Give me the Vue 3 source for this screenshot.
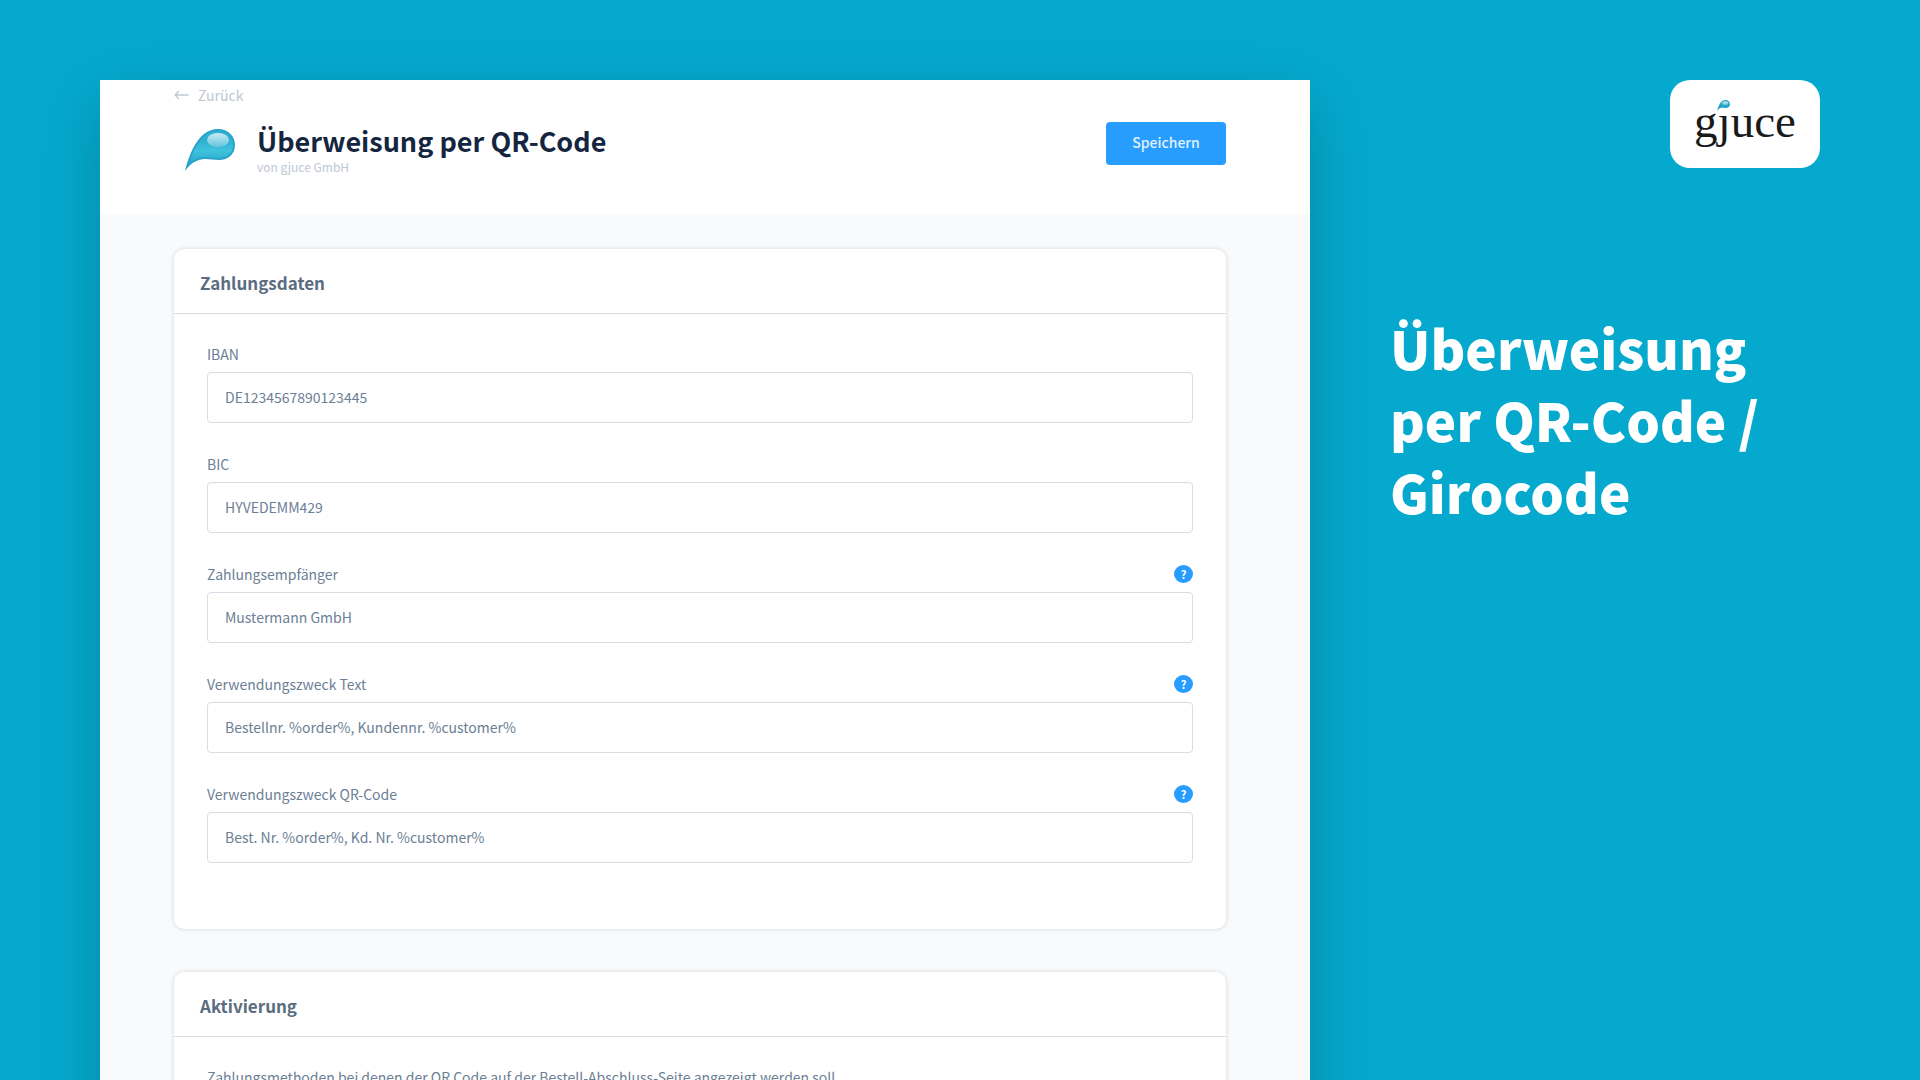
<template>
  <div class="page">
    <main class="shot">
      <header class="head">
        <a class="back" href="#">
          <svg class="back-icon" viewBox="0 0 15 10" aria-hidden="true">
            <path d="M14.5 5H1M5 1L1 5l4 4" fill="none" stroke="currentColor" stroke-width="1.300" />
          </svg>
          Zurück
        </a>
        <div class="head-row">
          <svg class="drop" viewBox="0 0 50 42" aria-hidden="true">
            <defs>
              <linearGradient id="dropFill" x1="0" y1="0" x2="0" y2="1">
                <stop offset="0" stop-color="#2fb0d2" />
                <stop offset=".35" stop-color="#31b2d3" />
                <stop offset=".6" stop-color="#40c3dc" />
                <stop offset="1" stop-color="#27a6cd" />
              </linearGradient>
              <linearGradient id="dropShine" x1="0" y1="0" x2="0" y2="1">
                <stop offset="0" stop-color="#c9ebf2" />
                <stop offset="1" stop-color="#62c6dc" />
              </linearGradient>
            </defs>
            <path d="M0 42C4 26 13 0 33 0 43 0 50 7 50 16 50 25 43 31 34 31 26 31 22 29 14 31 7 33 3 38 0 42Z" fill="#27a3ca" />
            <path d="M4 35C8 21 17 2 33 2 42 2 48 8 48 16 48 24 42 29 34 29 26 29 22 27 14 29 10 30 7 32 4 35Z" fill="url(#dropFill)" />
            <ellipse cx="33" cy="11" rx="11" ry="7" fill="url(#dropShine)" />
          </svg>
          <div class="head-text">
            <h1 class="title">Überweisung per QR-Code</h1>
            <p class="vendor">von gjuce GmbH</p>
          </div>
          <button class="save" type="button">Speichern</button>
        </div>
      </header>

      <div class="content">
        <section class="card">
          <h2 class="card-title">Zahlungsdaten</h2>
          <div class="card-body">
            <div v-for="field in fields" :key="field.id" class="field">
              <div class="field-head">
                <label :for="field.id">{{ field.label }}</label>
                <button v-if="field.help" class="help" type="button">?</button>
              </div>
              <input :id="field.id" v-model="field.value" class="field-input" type="text" />
            </div>
          </div>
        </section>

        <section class="card">
          <h2 class="card-title">Aktivierung</h2>
          <div class="card-body">
            <p class="hint">Zahlungsmethoden bei denen der QR Code auf der Bestell-Abschluss-Seite angezeigt werden soll</p>
          </div>
        </section>
      </div>
    </main>

    <aside class="side">
      <div class="logo">
        <span class="logo-text">gjuce</span>
        <svg class="logo-drop" viewBox="0 0 50 42" aria-hidden="true">
          <path d="M0 42C4 26 13 0 33 0 43 0 50 7 50 16 50 25 43 31 34 31 26 31 22 29 14 31 7 33 3 38 0 42Z" fill="#27a3ca" />
          <ellipse cx="32" cy="12" rx="12" ry="7" fill="url(#dropShine)" />
        </svg>
      </div>
      <p class="claim">Überweisung<br />per QR-Code /<br />Girocode</p>
    </aside>
  </div>
</template>

<script setup>
import { ref } from 'vue'

const fields = ref([
  { id: 'iban', label: 'IBAN', value: 'DE1234567890123445', help: false },
  { id: 'bic', label: 'BIC', value: 'HYVEDEMM429', help: false },
  { id: 'recipient', label: 'Zahlungsempfänger', value: 'Mustermann GmbH', help: true },
  { id: 'purpose-text', label: 'Verwendungszweck Text', value: 'Bestellnr. %order%, Kundennr. %customer%', help: true },
  { id: 'purpose-qr', label: 'Verwendungszweck QR-Code', value: 'Best. Nr. %order%, Kd. Nr. %customer%', help: true }
])
</script>

<style>
body { margin: 0; background: #05a9ce; }
</style>

<style scoped>
* { box-sizing: border-box; margin: 0; padding: 0; }
.page { height: 100vh; overflow: hidden; display: grid; grid-template-columns: minmax(0, 1fr) 430px; gap: 80px; padding: 80px 100px 0; background: #05a9ce; font-family: 'Noto Sans CJK SC', 'Noto Sans', sans-serif; }

.shot { background: #f9fafc; box-shadow: 0 20px 60px rgba(0, 0, 0, .2); }
.head { height: 134px; padding: 5px 84px 0 74px; background: white; }
.back { display: flex; align-items: center; gap: 9px; font-size: 14px; line-height: 20px; color: #bdc8d4; text-decoration: none; }
.back-icon { width: 15px; height: 10px; }
.head-row { display: flex; align-items: flex-start; padding: 17px 0 0 11px; }
.drop { width: 50px; height: 42px; margin: 7px 22px 0 0; }
.head-text { flex: 1; }
.title { font-size: 27px; line-height: 38px; font-weight: 700; color: #14263f; }
.vendor { font-size: 12px; line-height: 14px; color: #bdc8d4; }
.save { width: 120px; height: 43px; padding-bottom: 3px; border: none; border-radius: 4px; background: #279dff; color: #e0f1ff; font: 500 14px/20px 'Noto Sans CJK SC', 'Noto Sans', sans-serif; cursor: pointer; }

.content { display: grid; gap: 43px; padding: 35px 84px 0 74px; }
.card { background: white; border-radius: 10px; box-shadow: 0 0 4px rgba(0, 0, 0, .16); }
.card-title { padding: 21px 26px 17px; border-bottom: 1px solid #d5dde5; font-size: 17px; line-height: 26px; font-weight: 700; color: #5a6d80; }
.card-body { padding: 28px 33px 37px; }
.field { margin-bottom: 29px; }
.field-head { display: flex; align-items: center; justify-content: space-between; height: 24px; margin-bottom: 6px; font-size: 14px; line-height: 24px; color: #6c8095; }
.field-input { display: block; width: 100%; height: 51px; padding: 0 17px 2px; border: 1px solid #d5dde5; border-radius: 4px; background: white; color: #6c8095; font: 14px/24px 'Noto Sans CJK SC', 'Noto Sans', sans-serif; outline: none; }
.help { width: 19px; height: 18px; border: none; border-radius: 50%; background: #279dff; color: white; font: 700 11px/18px 'Noto Sans CJK SC', 'Noto Sans', sans-serif; text-align: center; cursor: pointer; }
.hint { font-size: 14px; line-height: 24px; color: #6c8095; }

.side { display: flex; flex-direction: column; }
.logo { position: relative; align-self: flex-end; width: 150px; height: 88px; border-radius: 20px; background: white; text-align: center; }
.logo-text { display: block; font-family: 'Liberation Serif', serif; font-size: 47px; line-height: 82px; color: #1a1a1a; }
.logo-drop { position: absolute; left: 47px; top: 20px; width: 13px; height: 11px; background: white; }
.claim { margin-top: 143px; font-size: 53px; line-height: 72px; font-weight: 900; color: white; }
</style>
